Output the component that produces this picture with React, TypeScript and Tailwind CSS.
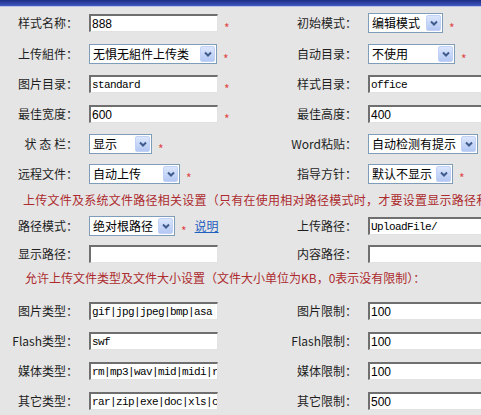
import React from 'react'

// Editor style settings form (old XP-style admin page)

const Label = ({ children }: { children: React.ReactNode }) => (
  <div className="w-[78px] shrink-0 whitespace-nowrap text-right text-[12px] text-[#1e1e1e]">{children}</div>
)

const Star = () => <span className="ml-[6px] mt-[9px] text-[12px] leading-none text-[#e04848]">*</span>

const TextInput = ({ value, mono }: { value: string; mono?: boolean }) => (
  <input
    readOnly
    defaultValue={value}
    className={`h-[18px] w-[129px] shrink-0 border-t-2 border-l-2 border-r border-b border-t-[#6f6f6f] border-l-[#6f6f6f] border-r-[#e2e2e2] border-b-[#e2e2e2] bg-white pl-[1px] text-black outline-none ${
      mono
        ? "font-['Liberation_Mono',monospace] text-[11px] tracking-[-0.6px]"
        : "font-['Liberation_Sans',Arial,sans-serif] text-[12px]"
    }`}
  />
)

const Select = ({ value, className }: { value: string; className: string }) => (
  <div
    className={`flex h-[20px] shrink-0 items-center justify-between border border-[#7f9db9] bg-white pl-[3px] pr-[1px] text-[12px] text-black ${className}`}
  >
    <span className="whitespace-nowrap">{value}</span>
    <span className="flex h-[16px] w-[15px] items-center justify-center rounded-[2px] border border-[#c2d2f6] bg-gradient-to-b from-[#dbe6fc] to-[#b4c8f3]">
      <svg width="8" height="6" viewBox="0 0 8 6">
        <path d="M1 1.5 L4 4.5 L7 1.5" fill="none" stroke="#3f5c8c" strokeWidth="2" />
      </svg>
    </span>
  </div>
)

const Row = ({
  h,
  left,
  leftField,
  right,
  rightField,
}: {
  h: string
  left: React.ReactNode
  leftField: React.ReactNode
  right: React.ReactNode
  rightField: React.ReactNode
}) => (
  <div className={`flex items-center ${h}`}>
    <Label>{left}</Label>
    <div className="ml-[11px] flex w-[190px] shrink-0 items-center">{leftField}</div>
    <Label>{right}</Label>
    <div className="ml-[11px] flex shrink-0 items-center">{rightField}</div>
  </div>
)

const App: React.FC = () => {
  return (
    <div className="h-[415px] w-[481px] overflow-hidden bg-[#e5e5e5] font-['Noto_Sans_CJK_SC',sans-serif]">
      {/* title bar strip */}
      <div className="h-[6px] bg-gradient-to-b from-[#1d2d84] to-[#4258c2]" />
      <div className="h-[1px] bg-[#b9c3e8]" />

      <Row
        h="h-[32px]"
        left="样式名称："
        leftField={<><TextInput value="888" /><Star /></>}
        right="初始模式："
        rightField={<><Select value="编辑模式" className="w-[75px]" /><Star /></>}
      />
      <Row
        h="h-[30px]"
        left="上传組件："
        leftField={<><Select value="无惧无組件上传类" className="w-[128px]" /><Star /></>}
        right="自动目录："
        rightField={<><Select value="不使用" className="w-[87px]" /><Star /></>}
      />
      <Row
        h="h-[30px]"
        left="图片目录："
        leftField={<><TextInput value="standard" mono /><Star /></>}
        right="样式目录："
        rightField={<TextInput value="office" mono />}
      />
      <Row
        h="h-[30px]"
        left="最佳宽度："
        leftField={<><TextInput value="600" /><Star /></>}
        right="最佳高度："
        rightField={<TextInput value="400" />}
      />
      <Row
        h="h-[30px]"
        left="状 态 栏："
        leftField={<><Select value="显示" className="w-[63px]" /><Star /></>}
        right="Word粘贴："
        rightField={<Select value="自动检测有提示" className="w-[110px]" />}
      />
      <Row
        h="h-[29px]"
        left="远程文件："
        leftField={<><Select value="自动上传" className="w-[91px]" /><Star /></>}
        right="指导方针："
        rightField={<><Select value="默认不显示" className="w-[85px]" /><Star /></>}
      />

      <div className="flex h-[24px] items-center whitespace-nowrap pl-[23px] text-[12px] leading-[14px] tracking-[0.25px] text-[#ad2b2e]">
        上传文件及系统文件路径相关设置（只有在使用相对路径模式时，才要设置显示路径和
      </div>

      <Row
        h="h-[28px]"
        left="路径模式："
        leftField={
          <>
            <Select value="绝对根路径" className="w-[86px]" />
            <Star />
            <a className="ml-[8px] text-[12px] text-[#1f5fbf] underline">说明</a>
          </>
        }
        right="上传路径："
        rightField={<TextInput value="UploadFile/" mono />}
      />
      <Row
        h="h-[28px]"
        left="显示路径："
        leftField={<TextInput value="" />}
        right="内容路径："
        rightField={<TextInput value="" />}
      />

      <div className="h-[28px] whitespace-nowrap pl-[25px] pt-[3px] text-[12px] leading-[14px] text-[#ad2b2e]">
        允许上传文件类型及文件大小设置（文件大小单位为KB，0表示没有限制）：
      </div>

      <Row
        h="h-[30px]"
        left="图片类型："
        leftField={<TextInput value="gif|jpg|jpeg|bmp|asa" mono />}
        right="图片限制："
        rightField={<TextInput value="100" />}
      />
      <Row
        h="h-[30px]"
        left="Flash类型："
        leftField={<TextInput value="swf" mono />}
        right="Flash限制："
        rightField={<TextInput value="100" />}
      />
      <Row
        h="h-[30px]"
        left="媒体类型："
        leftField={<TextInput value="rm|mp3|wav|mid|midi|rmi|wma" mono />}
        right="媒体限制："
        rightField={<TextInput value="100" />}
      />
      <Row
        h="h-[30px]"
        left="其它类型："
        leftField={<TextInput value="rar|zip|exe|doc|xls|chm|hlp" mono />}
        right="其它限制："
        rightField={<TextInput value="500" />}
      />
    </div>
  )
}

export default App
